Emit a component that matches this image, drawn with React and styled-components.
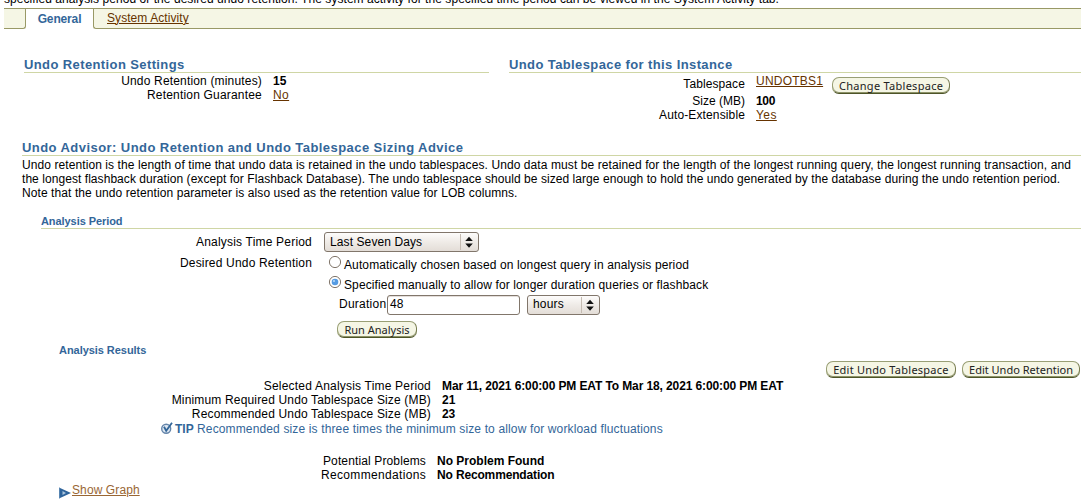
import React from 'react';
import styled, { createGlobalStyle } from 'styled-components';

const Global = createGlobalStyle`
  * { box-sizing: border-box; }
  body { margin: 0; background: #fff; overflow: hidden; }
`;

const Page = styled.main`
  width: 1081px;
  height: 499px;
  overflow: hidden;
  font: 12px/14px 'Liberation Sans', Arial, sans-serif;
  color: #000;
  white-space: nowrap;
`;

const T = styled.span`
  letter-spacing: ${p => p.$ls || 0}px;
`;
const B = styled(T)`font-weight: bold;`;
const Link = styled.a`
  color: ${p => p.$color || '#663300'};
  letter-spacing: ${p => p.$ls || 0}px;
  text-decoration: underline;
  text-underline-offset: 1px;
  text-decoration-thickness: 1px;
`;

const Intro = styled.div`
  height: 8px;
  padding-left: 4px;
  display: flex;
  align-items: flex-end;
  line-height: 14px;
  & > span { margin-bottom: 2px; }
`;

const TabBar = styled.nav`
  height: 21px;
  margin-left: 4px;
  display: flex;
  background: #f5f6e5;
  border-top: 1px solid #999966;
`;
const TabFill = styled.div`
  border-bottom: 1px solid #999966;
  width: ${p => (p.$w ? p.$w + 'px' : 'auto')};
  flex: ${p => (p.$w ? 'none' : 1)};
  padding: 2px 0 0 13px;
  border-radius: ${p => (p.$w ? '0 0 3px 0' : '0 0 0 3px')};
  border-${p => (p.$w ? 'right' : 'left')}: 1px solid #999966;
`;
const ActiveTab = styled.div`
  width: 67px;
  background: #fff;
  color: #336699;
  text-align: center;
  padding-top: 3px;
`;
const TabBack = styled.div`
  background: #fff;
  display: flex;
  flex: ${p => (p.$w ? 'none' : 1)};
  & > div { background: #f5f6e5; }
`;

const Columns = styled.section`
  display: grid;
  grid-template-columns: 465px 572px;
  column-gap: 20px;
  padding: 28px 0 0 24px;
  height: 111px;
`;
const Heading = styled.h2`
  margin: 0;
  height: 16px;
  font-size: 13px;
  line-height: 15px;
  letter-spacing: ${p => p.$ls || 0.39}px;
  color: #336699;
  border-bottom: 1px solid #cfd6a5;
`;
const SubHeading = styled.h3`
  margin: 0 0 0 ${p => p.$x}px;
  height: 14px;
  font-size: 11px;
  line-height: 13px;
  letter-spacing: ${p => p.$ls || 0}px;
  color: #336699;
  border-bottom: ${p => (p.$plain ? 'none' : '1px solid #cfd6a5')};
`;
const Fields = styled.div`
  padding-top: ${p => p.$top || 0}px;
`;
const Field = styled.div`
  display: grid;
  grid-template-columns: ${p => p.$label}px auto;
  column-gap: ${p => p.$gap || 11}px;
  justify-content: start;
  height: ${p => p.$h || 14}px;
  & > :first-child { text-align: right; padding-top: ${p => p.$drop || 0}px; }
`;
const Inline = styled.div`
  display: flex;
  align-items: flex-start;
  gap: ${p => p.$gap || 0}px;
`;

const Button = styled.button`
  width: ${p => p.$w}px;
  height: 17px;
  margin: ${p => p.$m || 0};
  padding: 0 0 1px;
  border: 1px solid #999f75;
  border-right-color: #777c50;
  border-bottom-color: #4d5428;
  border-radius: 7px;
  box-shadow: inset 0 -1px 0 #8d9368;
  background: #f5f6e5;
  color: #222;
  font: 11px/13px 'Noto Sans', sans-serif;
  letter-spacing: ${p => p.$ls || 0}px;
  white-space: nowrap;
  display: flex;
  justify-content: center;
  align-items: center;
  flex: none;
`;

const Advisor = styled.section`
  padding-left: 22px;
  & > p { margin: 2px 0 0; height: 57px; }
  & > p > span { display: block; }
`;

const Select = styled.div`
  width: ${p => p.$w}px;
  height: 20px;
  margin-left: ${p => p.$x || 0}px;
  padding-left: 5px;
  border: 1px solid #81766b;
  border-radius: 3px;
  background: linear-gradient(#fdfcfb, #efebe7 50%, #e3ddd7);
  display: flex;
  justify-content: space-between;
  align-items: center;
  flex: none;
  & > span { margin-top: ${p => p.$lift || 0}px; }
`;
const Arrows = styled.svg`
  width: 18px;
  height: 16px;
  border-left: 1px solid #c4bbb2;
`;
const Input = styled.div`
  width: 133px;
  height: 20px;
  padding: 1px 1px 0 2px;
  border: 1px solid #81766b;
  border-radius: 3px;
  box-shadow: inset 0 1px 0 #e4deda;
`;
const RadioIcon = styled.svg`
  width: 14px;
  height: 14px;
  margin-left: 4px;
  flex: none;
`;
const ChoiceList = styled.div`
  padding-left: 11px;
`;
const Option = styled.div`
  display: flex;
  height: 20px;
  & > svg { margin-top: -1px; }
  & > span { padding-top: 2px; margin-left: 2px; }
`;
const Duration = styled.div`
  display: flex;
  height: 26px;
  padding-left: 339px;
  & > span { width: 48px; padding-top: 2px; }
`;
const Actions = styled.div`
  display: flex;
  justify-content: flex-end;
  gap: 6px;
  height: 18px;
  padding-right: 1px;
`;
const Tip = styled.div`
  display: flex;
  color: #336699;
  height: 33px;
  padding: 1px 0 0 161px;
  & > svg { margin-right: 2px; }
`;
const Graph = styled.div`
  display: flex;
  padding: 1px 0 0 59px;
  & > svg { margin: 4px 1px 0 0; flex: none; }
`;

const Radio = ({ checked }) => (
  <RadioIcon viewBox="0 0 14 14">
    <circle cx="7" cy="7" r="5.6" fill="#fff" stroke="#81766b" />
    {checked && <circle cx="7" cy="7" r="3.3" fill="#559be3" />}
    {checked && <circle cx="6" cy="6" r="1.1" fill="#b5d8f7" />}
  </RadioIcon>
);
const Chooser = ({ w, x, ls, lift, children }) => (
  <Select $w={w} $x={x} $lift={lift}>
    <T $ls={ls}>{children}</T>
    <Arrows viewBox="0 0 18 16">
      <path d="M4.5 7L8.5 2.5L12.5 7ZM4.5 9.5L8.5 14L12.5 9.5Z" fill="#111" />
    </Arrows>
  </Select>
);

export default function App() {
  return (
    <Page>
      <Global />
      <Intro><T $ls={0.055}>specified analysis period or the desired undo retention. The system activity for the specified time period can be viewed in the System Activity tab.</T></Intro>
      <TabBar>
        <TabBack $w={22}><TabFill $w={22} /></TabBack>
        <ActiveTab><B $ls={-0.15}>General</B></ActiveTab>
        <TabBack><TabFill><Link $ls={0.07}>System Activity</Link></TabFill></TabBack>
      </TabBar>
      <Columns>
        <div>
          <Heading>Undo Retention Settings</Heading>
          <Fields $top={1}>
            <Field $label={238}><T $ls={0.17}>Undo Retention (minutes)</T><B>15</B></Field>
            <Field $label={238}><T $ls={0.19}>Retention Guarantee</T><Link $ls={0.4}>No</Link></Field>
          </Fields>
        </div>
        <div>
          <Heading>Undo Tablespace for this Instance</Heading>
          <Fields $top={1}>
            <Field $label={236} $h={20} $drop={3}>
              <T $ls={0.1}>Tablespace</T>
              <Inline $gap={9}><Link $ls={0.22}>UNDOTBS1</Link><Button $w={118} $ls={0.28} $m="3px 0 0">Change Tablespace</Button></Inline>
            </Field>
            <Field $label={236}><T>Size (MB)</T><B $ls={-0.3}>100</B></Field>
            <Field $label={236}><T $ls={0.13}>Auto-Extensible</T><Link $ls={0.4}>Yes</Link></Field>
          </Fields>
        </div>
      </Columns>
      <Advisor>
        <Heading $ls={0.44}>Undo Advisor: Undo Retention and Undo Tablespace Sizing Advice</Heading>
        <p>
          <T $ls={0.087}>Undo retention is the length of time that undo data is retained in the undo tablespaces. Undo data must be retained for the length of the longest running query, the longest running transaction, and</T>
          <T $ls={0.058}>the longest flashback duration (except for Flashback Database). The undo tablespace should be sized large enough to hold the undo generated by the database during the undo retention period.</T>
          <T $ls={0.087}>Note that the undo retention parameter is also used as the retention value for LOB columns.</T>
        </p>
      </Advisor>
      <SubHeading $x={41} $ls={-0.07}>Analysis Period</SubHeading>
      <Fields $top={3}>
        <Field $label={312} $gap={12} $h={24} $drop={3}>
          <T $ls={0.2}>Analysis Time Period</T>
          <Chooser w={155} ls={0.1}>Last Seven Days</Chooser>
        </Field>
        <Field $label={312} $gap={1} $h={39}>
          <T $ls={0.18}>Desired Undo Retention</T>
          <ChoiceList>
            <Option><Radio /><T $ls={0.12}>Automatically chosen based on longest query in analysis period</T></Option>
            <Option><Radio checked /><T $ls={0.12}>Specified manually to allow for longer duration queries or flashback</T></Option>
          </ChoiceList>
        </Field>
        <Duration>
          <T $ls={0.25}>Duration</T>
          <Input>48</Input>
          <Chooser w={73} x={7} ls={0.2} lift={-2}>hours</Chooser>
        </Duration>
        <Button $w={80} $m="0 0 0 337px">Run Analysis</Button>
      </Fields>
      <Fields $top={6}>
        <SubHeading $x={59} $plain $ls={-0.05}>Analysis Results</SubHeading>
      </Fields>
      <Fields $top={3}>
        <Actions><Button $w={130} $ls={0.25}>Edit Undo Tablespace</Button><Button $w={118}>Edit Undo Retention</Button></Actions>
        <Field $label={431}><T $ls={0.2}>Selected Analysis Time Period</T><B $ls={-0.11}>Mar 11, 2021 6:00:00 PM EAT To Mar 18, 2021 6:00:00 PM EAT</B></Field>
        <Field $label={431}><T $ls={0.16}>Minimum Required Undo Tablespace Size (MB)</T><B>21</B></Field>
        <Field $label={431}><T $ls={0.16}>Recommended Undo Tablespace Size (MB)</T><B $ls={-0.2}>23</B></Field>
      </Fields>
      <Tip>
        <svg width="12" height="13" viewBox="0 0 12 13">
          <circle cx="5.2" cy="6.8" r="4.5" fill="#dfe8f2" stroke="#6585aa" strokeWidth="1.4" />
          <path d="M3 4.8L5.2 8.8L11 .8" fill="none" stroke="#336699" strokeWidth="1.8" />
        </svg>
        <B>TIP</B>&nbsp;<T $ls={0.14}>Recommended size is three times the minimum size to allow for workload fluctuations</T>
      </Tip>
      <Field $label={426}><T $ls={0.13}>Potential Problems</T><B>No Problem Found</B></Field>
      <Field $label={426}><T $ls={0.33}>Recommendations</T><B $ls={-0.15}>No Recommendation</B></Field>
      <Graph>
        <svg width="12" height="12" viewBox="0 0 12 12">
          <path d="M0 .5L12 6L0 11.5Z" fill="#2f649b" />
          <path d="M0 .5V11.5" stroke="#7fa3c8" />
          <path d="M3.5 4L7 6L3.5 8Z" fill="#a9c4dd" />
        </svg>
        <Link $ls={0.1} $color="#996633">Show Graph</Link>
      </Graph>
    </Page>
  );
}
